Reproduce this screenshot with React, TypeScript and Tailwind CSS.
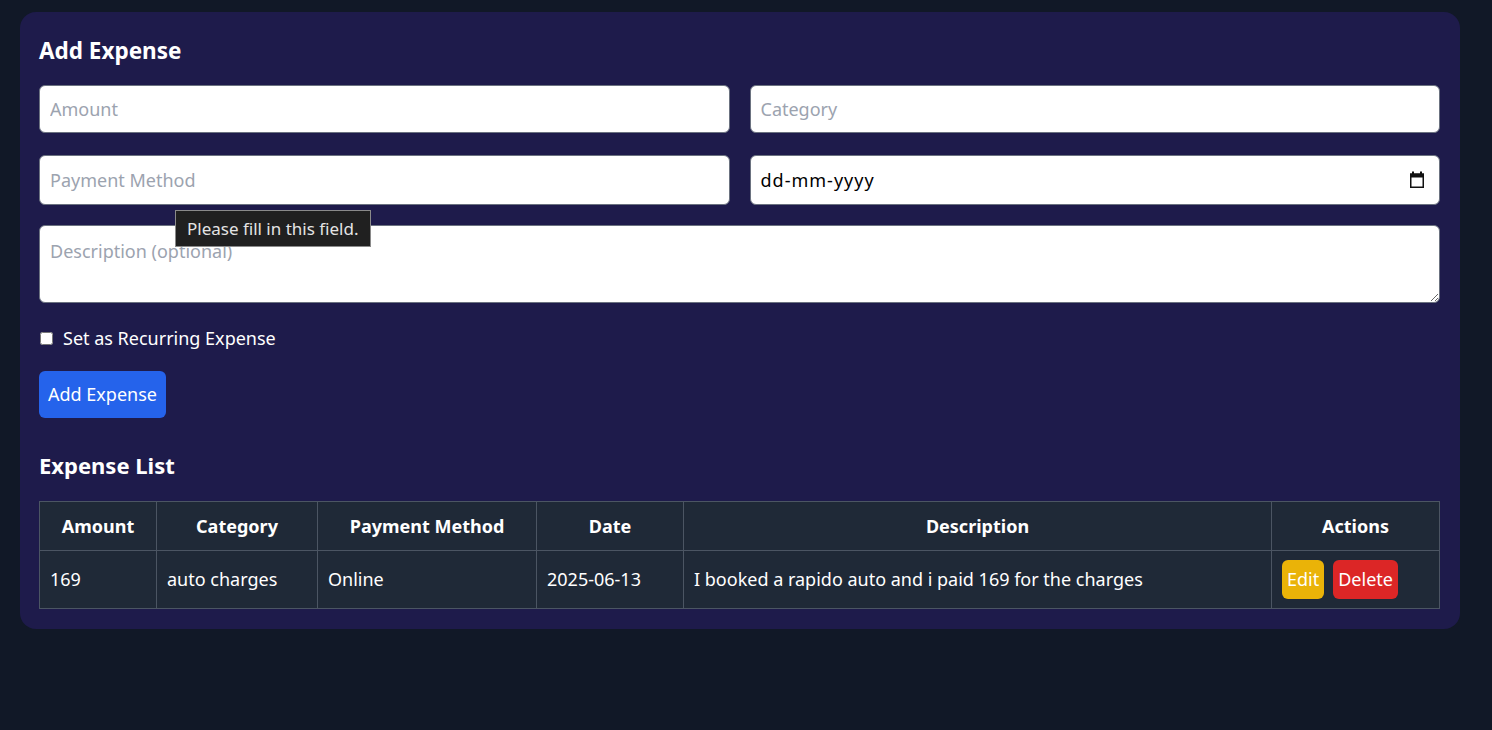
import React from "react";

const font = { fontFamily: '"Noto Sans", "Open Sans", sans-serif' };

function CalendarIcon() {
  return (
    <svg width="16" height="18" viewBox="0 0 16 18" className="shrink-0">
      <rect x="3" y="0.5" width="2" height="3" fill="#111" />
      <rect x="11" y="0.5" width="2" height="3" fill="#111" />
      <rect x="1" y="2.5" width="14" height="4" fill="#111" />
      <rect x="1.75" y="3.25" width="12.5" height="13" fill="none" stroke="#111" strokeWidth="1.5" />
    </svg>
  );
}

export default function App() {
  const inputCls =
    "w-full h-[48px] rounded-md border border-[#6b7280] bg-white px-[10px] text-[18px] text-black placeholder:text-[#9ca3af] outline-none";

  return (
    <div className="min-h-[730px] w-full bg-[#111827] pt-3 pl-5" style={font}>
      <div className="w-[1440px] rounded-2xl bg-[#1e1b4b] pl-[19px] pr-5 pt-[23px] pb-5">
        <h2 className="text-[22.5px] font-bold leading-[32px] text-white">Add Expense</h2>

        <div className="relative mt-[18px] flex flex-col">
          <div className="grid grid-cols-2 gap-x-5">
            <input className={inputCls} placeholder="Amount" />
            <input className={inputCls} placeholder="Category" />
          </div>
          <div className="mt-[22px] grid grid-cols-2 gap-x-5">
            <input className={inputCls + " h-[50px]"} placeholder="Payment Method" />
            <div className="flex h-[50px] items-center justify-between rounded-md border border-[#6b7280] bg-white pl-[10px] pr-[14px]">
              <span className="text-[18px] text-black tracking-[1px]">dd-mm-yyyy</span>
              <CalendarIcon />
            </div>
          </div>
          <div className="relative mt-[20px]">
            <textarea
              className="block h-[78px] w-full resize-y rounded-md border border-[#6b7280] bg-white px-[10px] py-[12px] text-[18px] leading-[26px] text-black placeholder:text-[#9ca3af] outline-none"
              placeholder="Description (optional)"
            />
          </div>

          {/* validation bubble */}
          <div className="absolute left-[136px] top-[125px] border border-[#8a8a8a] bg-[#202020] px-[11px] py-[5px] text-[17px] leading-[25px] text-[#e4e4e4]">
            Please fill in this field.
          </div>

          <label className="mt-[24px] flex items-center text-[18px] leading-[22px] text-white">
            <input type="checkbox" className="ml-[1px] h-[13px] w-[13px] rounded-sm" />
            <span className="ml-[10px]">Set as Recurring Expense</span>
          </label>

          <div className="mt-[22px]">
            <button className="h-[47px] rounded-md bg-[#2563eb] px-[9px] text-[18px] text-white">
              Add Expense
            </button>
          </div>
        </div>

        <h2 className="mt-[31px] text-[22px] font-bold leading-[32px] text-white">Expense List</h2>

        <table className="mt-[20px] w-full border-collapse border border-[#4b5563] bg-[#1f2937] text-[18px] text-white">
          <thead>
            <tr className="h-[49px]">
              <th className="w-[117px] border border-[#4b5563] font-bold">Amount</th>
              <th className="w-[161px] border border-[#4b5563] font-bold">Category</th>
              <th className="w-[219px] border border-[#4b5563] font-bold">Payment Method</th>
              <th className="w-[147px] border border-[#4b5563] font-bold">Date</th>
              <th className="w-[588px] border border-[#4b5563] font-bold">Description</th>
              <th className="border border-[#4b5563] font-bold">Actions</th>
            </tr>
          </thead>
          <tbody>
            <tr className="h-[58px]">
              <td className="border border-[#4b5563] px-[10px]">169</td>
              <td className="border border-[#4b5563] px-[10px]">auto charges</td>
              <td className="border border-[#4b5563] px-[10px]">Online</td>
              <td className="border border-[#4b5563] px-[10px]">2025-06-13</td>
              <td className="border border-[#4b5563] px-[10px]">I booked a rapido auto and i paid 169 for the charges</td>
              <td className="border border-[#4b5563] px-[10px]">
                <div className="flex items-center gap-[9px]">
                  <button className="h-[39px] rounded-md bg-[#eab308] px-[5px] text-white">Edit</button>
                  <button className="h-[39px] rounded-md bg-[#dc2626] px-[5px] text-white">Delete</button>
                </div>
              </td>
            </tr>
          </tbody>
        </table>
      </div>
    </div>
  );
}
